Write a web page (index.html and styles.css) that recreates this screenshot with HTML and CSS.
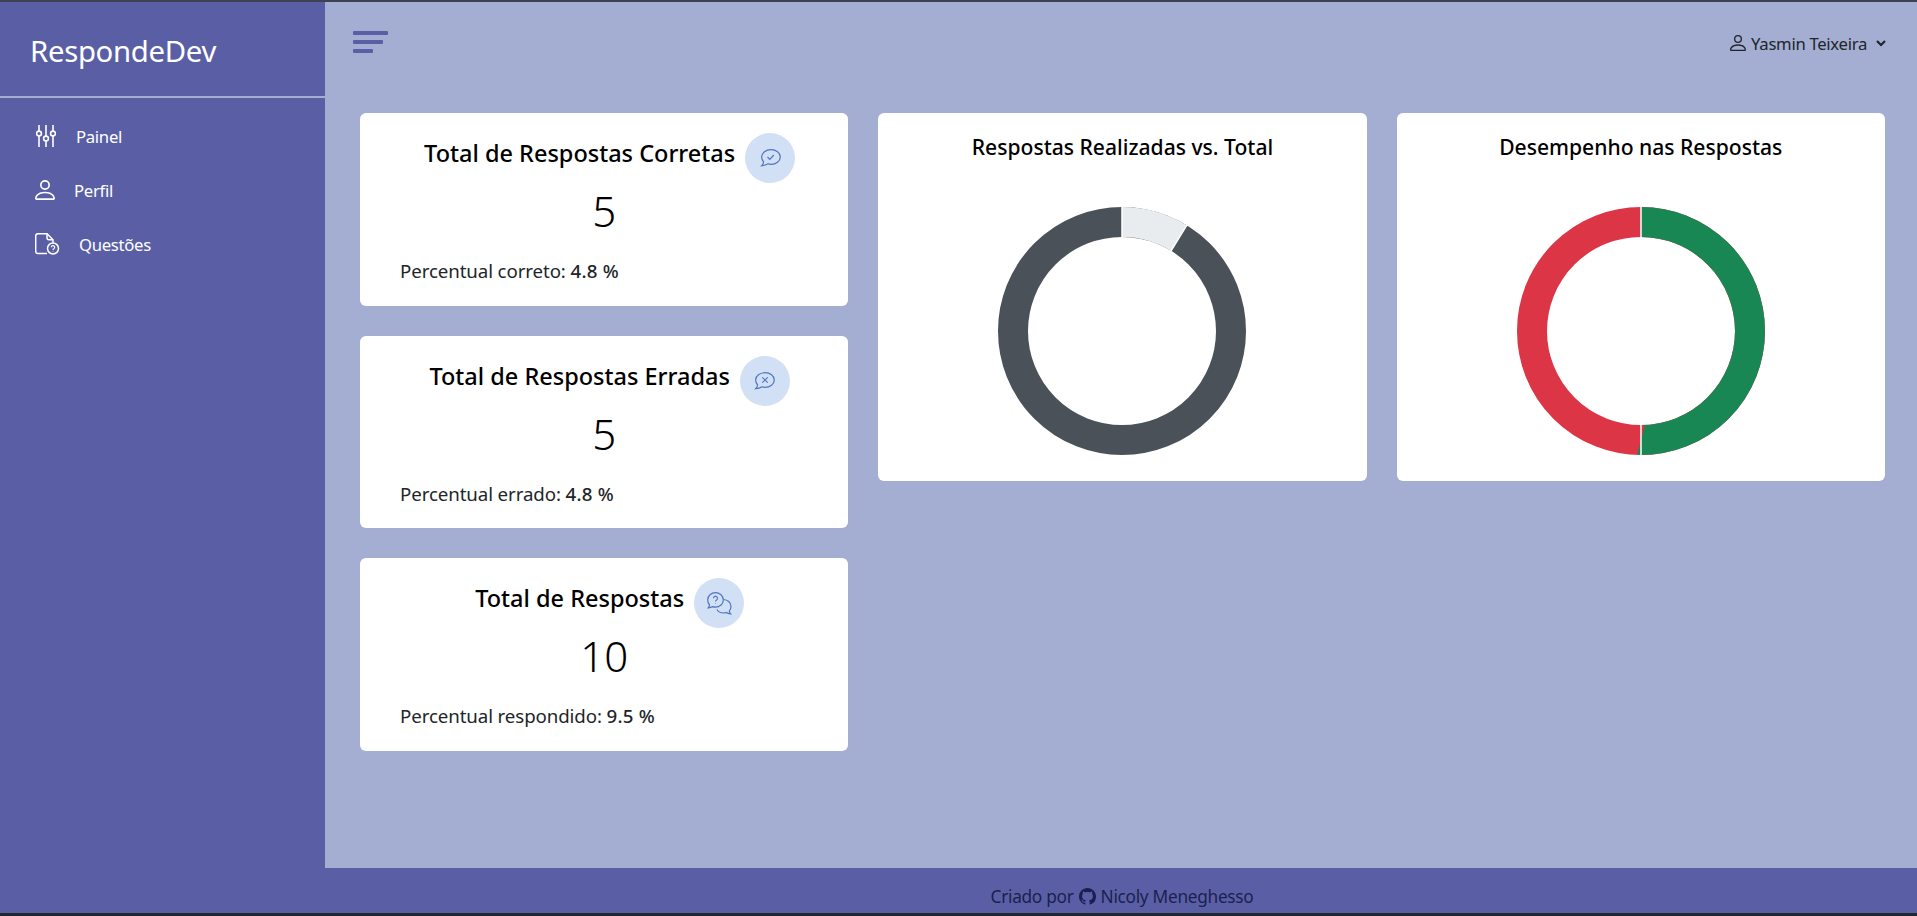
FILE: index.html
```html
<!DOCTYPE html>
<html lang="pt-BR">
<head>
<meta charset="utf-8">
<title>RespondeDev</title>
<link rel="stylesheet" href="styles.css">
</head>
<body>
<div class="frame">
  <div class="layout">
    <aside class="sidebar">
      <div class="brand">RespondeDev</div>
      <nav class="nav">
        <a class="nav-item nav-painel">
          <svg class="nav-icon" width="20" height="22" viewBox="0 0 20 22" fill="none" stroke="currentColor" stroke-width="1.600"><path d="M3 0v6M3 11v11M10 0v11M10 16v6M17 0v6M17 11v11"/><circle cx="3" cy="8.500" r="2.400"/><circle cx="10" cy="13.500" r="2.400"/><circle cx="17" cy="8.500" r="2.400"/></svg>
          <span>Painel</span>
        </a>
        <a class="nav-item nav-perfil">
          <svg class="nav-icon" width="20" height="22" viewBox="2 1.500 12 13" fill="currentColor"><path d="M8 8a3 3 0 1 0 0-6 3 3 0 0 0 0 6Zm2-3a2 2 0 1 1-4 0 2 2 0 0 1 4 0Zm4 8c0 1-1 1-1 1H3s-1 0-1-1 1-4 6-4 6 3 6 4Zm-1-.004c-.001-.246-.154-.986-.832-1.664C11.516 10.680 10.289 10 8 10c-2.290 0-3.516.68-4.168 1.332-.678.678-.83 1.418-.832 1.664h10Z"/></svg>
          <span>Perfil</span>
        </a>
        <a class="nav-item nav-questoes">
          <svg class="nav-icon" width="25" height="22" viewBox="0 0 25 22" fill="none" stroke="currentColor" stroke-width="1.500"><path d="M12 20.500H3a2.300 2.300 0 0 1-2.300-2.300V3A2.300 2.300 0 0 1 3 .7h9l6 6v3"/><path d="M12 .7v4A2 2 0 0 0 14 6.700h4"/><circle cx="18" cy="15.500" r="5.500"/><path d="M16.300 14.300a1.700 1.700 0 1 1 2.500 1.500c-.6.3-.8.6-.8 1.100M18 18.300v.4" stroke-width="1.200"/></svg>
          <span>Questões</span>
        </a>
      </nav>
    </aside>
    <main class="main">
      <header class="topbar">
        <div class="burger"><i class="bar-a"></i><i class="bar-b"></i><i class="bar-c"></i></div>
        <div class="user">
          <svg width="16" height="18" viewBox="2 1.500 12 13" fill="currentColor"><path d="M8 8a3 3 0 1 0 0-6 3 3 0 0 0 0 6Zm2-3a2 2 0 1 1-4 0 2 2 0 0 1 4 0Zm4 8c0 1-1 1-1 1H3s-1 0-1-1 1-4 6-4 6 3 6 4Zm-1-.004c-.001-.246-.154-.986-.832-1.664C11.516 10.680 10.289 10 8 10c-2.290 0-3.516.68-4.168 1.332-.678.678-.83 1.418-.832 1.664h10Z"/></svg>
          <span class="user-name">Yasmin Teixeira</span>
          <svg class="chev" width="10" height="7" viewBox="0 0 10 7" fill="none" stroke="currentColor" stroke-width="2.200"><path d="M1 1l4 4 4-4"/></svg>
        </div>
      </header>
      <section class="dashboard">
        <div class="stats">
          <article class="card stat">
            <div class="stat-head">
              <h5 class="card-title">Total de Respostas Corretas</h5>
              <span class="icon-circle">
                <svg width="21" height="18" viewBox="0 0 21 18" fill="none" stroke="currentColor" stroke-width="1.200"><path d="M11 .7c5 0 9.300 3.200 9.300 7.300s-4.300 7.300-9.300 7.300c-1.100 0-2.100-.2-3-.5-1.200.9-3 1.700-6.300 1.900 1-.9 1.800-2.500 1.900-3.900C2.400 11.400 1.600 9.700 1.600 8c0-4.100 4.400-7.300 9.400-7.300Z"/><path d="M7.500 8l2.300 2.300 4-4.300"/></svg>
              </span>
            </div>
            <div class="stat-value">5</div>
            <p class="stat-text">Percentual correto: <b>4.8 %</b></p>
          </article>
          <article class="card stat">
            <div class="stat-head">
              <h5 class="card-title">Total de Respostas Erradas</h5>
              <span class="icon-circle">
                <svg width="21" height="18" viewBox="0 0 21 18" fill="none" stroke="currentColor" stroke-width="1.200"><path d="M11 .7c5 0 9.300 3.200 9.300 7.300s-4.300 7.300-9.300 7.300c-1.100 0-2.100-.2-3-.5-1.200.9-3 1.700-6.300 1.900 1-.9 1.800-2.500 1.900-3.900C2.400 11.400 1.600 9.700 1.600 8c0-4.100 4.400-7.300 9.400-7.300Z"/><path d="M8.300 5.300l5.400 5.400M13.700 5.300l-5.400 5.400"/></svg>
              </span>
            </div>
            <div class="stat-value">5</div>
            <p class="stat-text">Percentual errado: <b>4.8 %</b></p>
          </article>
          <article class="card stat">
            <div class="stat-head">
              <h5 class="card-title">Total de Respostas</h5>
              <span class="icon-circle">
                <svg width="25" height="23" viewBox="0 0 25 23" fill="none" stroke="currentColor" stroke-width="1.200"><path d="M8.500 .7c4.300 0 7.800 3.200 7.800 7.200s-3.500 7.200-7.800 7.200c-1 0-2-.2-2.900-.5-1 .7-2.500 1.200-4.400 1.300.7-.7 1.200-1.800 1.300-3C1.400 11.600.7 9.800.7 7.900.7 3.900 4.200.7 8.500.7Z"/><path d="M6.500 6.200a2 2 0 1 1 3.100 1.700c-.7.4-1.100.8-1.100 1.600M8.500 11.200v.5"/><path d="M16.500 7.500c4 .2 7.500 3 7.500 6.900 0 1.700-.7 3.200-1.700 4.400.1 1.200.6 2.300 1.300 3-1.900-.1-3.400-.6-4.400-1.300-.9.3-1.800.5-2.800.5-2.800 0-5.200-1.400-6.500-3.500"/></svg>
              </span>
            </div>
            <div class="stat-value">10</div>
            <p class="stat-text">Percentual respondido: <b>9.5 %</b></p>
          </article>
        </div>
        <article class="card chart-card">
          <h5 class="card-title chart-title">Respostas Realizadas vs. Total</h5>
          <svg class="donut" width="248" height="248" viewBox="-124 -124 248 248">
            <circle class="ring ring-dark" r="109" pathLength="100"/>
            <circle class="ring ring-light" r="109" pathLength="100" stroke-dasharray="8.750 91.250" transform="rotate(-90)"/>
            <path class="sep" d="M0 -125V-93"/>
            <path class="sep" d="M65.300 -106.600L48.600 -79.300"/>
          </svg>
        </article>
        <article class="card chart-card">
          <h5 class="card-title chart-title">Desempenho nas Respostas</h5>
          <svg class="donut" width="248" height="248" viewBox="-124 -124 248 248">
            <circle class="ring ring-red" r="109" pathLength="100"/>
            <circle class="ring ring-green" r="109" pathLength="100" stroke-dasharray="50 50" transform="rotate(-90)"/>
            <path class="sep" d="M0 -125V-93M0 93V125"/>
          </svg>
        </article>
      </section>
    </main>
  </div>
  <footer class="footer">
    <span>Criado por</span>
    <svg width="17" height="17" viewBox="0 0 16 16" fill="currentColor"><path d="M8 0C3.580 0 0 3.580 0 8c0 3.540 2.290 6.530 5.470 7.590.4.070.55-.17.55-.38 0-.19-.01-.82-.01-1.490-2.010.37-2.530-.49-2.690-.94-.09-.23-.48-.94-.82-1.130-.28-.15-.68-.52-.01-.53.63-.01 1.080.58 1.230.82.72 1.210 1.870.87 2.330.66.070-.52.28-.87.51-1.070-1.780-.2-3.640-.89-3.640-3.950 0-.87.31-1.590.82-2.150-.08-.2-.36-1.020.08-2.120 0 0 .67-.21 2.200.82.64-.18 1.320-.27 2-.27.68 0 1.360.09 2 .27 1.530-1.040 2.200-.82 2.200-.82.44 1.100.16 1.920.08 2.120.51.56.82 1.270.82 2.150 0 3.070-1.870 3.750-3.650 3.950.29.25.54.73.54 1.480 0 1.070-.01 1.930-.01 2.200 0 .21.15.46.55.38A8.013 8.013 0 0 0 16 8c0-4.420-3.580-8-8-8z"/></svg>
    <span>Nicoly Meneghesso</span>
  </footer>
</div>
</body>
</html>
```
FILE: styles.css
```css
* { box-sizing: border-box; }
html, body { margin: 0; height: 100%; }
body {
  overflow: hidden;
  font-family: "Noto Sans", "Open Sans", sans-serif;
  color: #212529;
  background: #a4aed3;
}
.frame {
  height: 916px;
  display: flex;
  flex-direction: column;
  border-top: 2px solid #3f4152;
  border-bottom: 3px solid #1f2a30;
}
.layout { flex: 1; display: flex; min-height: 0; }
.sidebar { width: 325px; background: #5a5fa5; color: #fff; flex: none; }
.brand {
  height: 96px;
  padding: 29px 0 0 30px;
  font-size: 29.300px;
  line-height: 40px;
  letter-spacing: -0.3px;
  border-bottom: 2px solid #a4aed3;
}
.nav { display: flex; flex-direction: column; padding-top: 27px; gap: 32px; }
.nav-item { display: flex; align-items: center; height: 22px; padding-left: 35px; font-size: 16.700px; letter-spacing: -0.3px; }
.nav-painel { gap: 20px; padding-left: 36px; }
.nav-perfil { gap: 19px; }
.nav-questoes { gap: 19px; }
.main { flex: 1; min-width: 0; padding: 0 31px 0 35px; }
.topbar { height: 111px; display: flex; justify-content: space-between; padding-top: 29px; }
.burger { display: flex; flex-direction: column; gap: 5px; margin-left: -7px; }
.burger i { display: block; height: 4px; background: #5a5fa5; border-radius: 1px; }
.bar-a { width: 35px; }
.bar-b { width: 30px; }
.bar-c { width: 20px; }
.user { display: flex; align-items: center; height: 24px; color: #212529; font-size: 16.700px; letter-spacing: -0.3px; }
.user-name { margin: 0 9px 0 5px; }
.dashboard { display: grid; grid-template-columns: repeat(3, 488.300px); column-gap: 30px; align-items: start; }
.stats { display: flex; flex-direction: column; gap: 30px; }
.card { background: #fff; border-radius: 6px; }
.stat { height: 192.670px; padding-top: 20px; }
.stat-head { display: flex; align-items: center; justify-content: center; gap: 10px; padding-left: 11px; height: 50px; }
.card-title { margin: 0; font-size: 23.500px; font-weight: 500; color: #000; line-height: 30px; }
.chart-title { font-size: 21.100px; }
.stat-head .card-title { margin-top: -10px; }
.icon-circle { width: 50px; height: 50px; border-radius: 50%; background: #d2e0f5; color: #4f76bf; display: flex; align-items: center; justify-content: center; flex: none; }
.stat-value { text-align: center; font-size: 42px; font-weight: 350; line-height: 50px; color: #000; margin-top: 3px; }
.stat-text { margin: 22px 0 0 40px; font-size: 18.700px; line-height: 26px; letter-spacing: -0.1px; }
.stat-text b { font-weight: 500; letter-spacing: 0.2px; }
.chart-card { height: 368px; padding-top: 19px; display: flex; flex-direction: column; align-items: center; }
.donut { display: block; margin-top: 45px; }
.ring { fill: none; stroke-width: 30; }
.ring-dark { stroke: #4b5159; }
.ring-light { stroke: #e9ecef; }
.ring-red { stroke: #dc3545; }
.ring-green { stroke: #198754; }
.sep { stroke: #fff; stroke-width: 1.500; fill: none; }
.footer {
  height: 45px;
  flex: none;
  background: #5a5fa5;
  color: #1b1f4f;
  display: flex;
  align-items: center;
  justify-content: center;
  padding: 12px 0 0 327px;
  gap: 5px;
  font-size: 17.300px;
  letter-spacing: -0.3px;
}
```
